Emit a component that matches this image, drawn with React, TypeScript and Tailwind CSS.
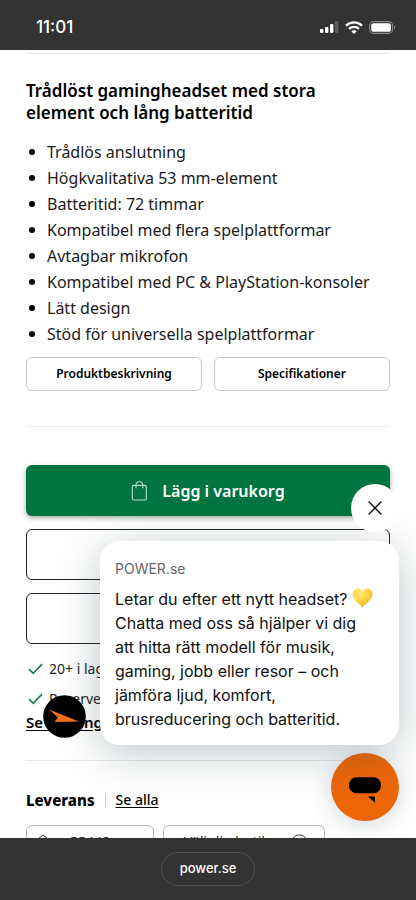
import React from "react";
import { clsx } from "clsx";

const features = [
  "Trådlös anslutning",
  "Högkvalitativa 53 mm-element",
  "Batteritid: 72 timmar",
  "Kompatibel med flera spelplattformar",
  "Avtagbar mikrofon",
  "Kompatibel med PC & PlayStation-konsoler",
  "Lätt design",
  "Stöd för universella spelplattformar",
];

const StatusBar = () => (
  <header className="flex h-[50px] shrink-0 items-center justify-between bg-[#333333] pr-5 pl-9 pt-1 text-white">
    <time className="font-['Inter',sans-serif] text-[17px] font-medium leading-5">11:01</time>
    <div className="flex items-center gap-[6px]">
      <svg width="19" height="12" viewBox="0 0 19 12" fill="#fff" aria-hidden="true">
        <rect x="0" y="8" width="3.4" height="4" rx="1" />
        <rect x="5" y="6" width="3.4" height="6" rx="1" />
        <rect x="10" y="3" width="3.4" height="9" rx="1" />
        <rect x="15" y="0" width="3.4" height="12" rx="1" fill="#5c5c5c" />
      </svg>
      <svg width="18" height="13" viewBox="0 0 18 13" fill="none" stroke="#fff" strokeWidth="2.3" aria-hidden="true">
        <path d="M1 4.6C5.5.2 12.5.2 17 4.6" />
        <path d="M4 7.9c2.8-2.7 7.2-2.7 10 0" />
        <path d="M9 13 6.3 10.3c1.5-1.4 3.9-1.4 5.4 0Z" fill="#fff" stroke="none" />
      </svg>
      <svg width="27" height="13" viewBox="0 0 27 13" fill="none" aria-hidden="true">
        <rect x=".6" y=".6" width="23" height="11.8" rx="4" stroke="#8a8a8a" strokeWidth="1.1" />
        <rect x="2.2" y="2.2" width="19.8" height="8.6" rx="2.6" fill="#fff" />
        <path d="M25 4.6c1.4.5 1.4 3.3 0 3.8Z" fill="#8a8a8a" />
      </svg>
    </div>
  </header>
);

const CheckIcon = () => (
  <svg className="shrink-0" width="15" height="12" viewBox="0 0 15 12" fill="none" stroke="#1b7f4b" strokeWidth="1.7" aria-hidden="true">
    <path d="M1 6.2 5.2 10.4 14 1.2" />
  </svg>
);

const Divider = ({ className }: { className?: string }) => (
  <hr className={clsx("border-t border-[#ebebeb]", className)} />
);

const ProductInfo = () => (
  <main className="min-h-0 flex-1 overflow-hidden px-[26px] pt-[3px]">
    <Divider />
    <h2 className="mt-[26px] max-w-[320px] text-[17px] font-semibold leading-[22px]">
      Trådlöst gamingheadset med stora element och lång batteritid
    </h2>
    <ul className="mt-[15px] text-base leading-[26px]">
      {features.map((feature) => (
        <li key={feature} className="flex items-center gap-3 pl-[3px] whitespace-nowrap text-[#1a1a1a]">
          <span className="size-[6px] rounded-full bg-black" />
          {feature}
        </li>
      ))}
    </ul>

    <div className="mt-[10px] grid grid-cols-2 gap-3 text-xs font-semibold">
      <button type="button" className="h-[34px] rounded-md border border-[#c8c8c8]">Produktbeskrivning</button>
      <button type="button" className="h-[34px] rounded-md border border-[#c8c8c8]">Specifikationer</button>
    </div>
    <Divider className="mt-[35px]" />

    <div className="mt-[38px] flex flex-col gap-[13px]">
      <button
        type="button"
        className="flex h-[51px] items-center justify-center gap-[14px] rounded-md bg-[#00753f] text-base font-semibold text-white shadow-[0_2px_5px_rgba(0,0,0,0.35)]"
      >
        <svg width="17" height="20" viewBox="0 0 17 20" fill="none" stroke="#b9dcc9" strokeWidth="1.1" aria-hidden="true">
          <rect x="1.3" y="4.4" width="14" height="14.6" rx="1.6" />
          <path d="M5 7.3V4.1a3.4 3.4 0 0 1 6.8 0v3.2" />
        </svg>
        Lägg i varukorg
      </button>
      <button type="button" aria-label="Alternativ 1" className="h-[51px] rounded-md border border-[#222]" />
      <button type="button" aria-label="Alternativ 2" className="h-[51px] rounded-md border border-[#222]" />
    </div>

    <ul className="mt-[15px] flex flex-col gap-[10px] text-[14px] leading-5 text-[#222]">
      <li className="flex items-center gap-[6px] pl-[2px]"><CheckIcon />20+ i lager</li>
      <li className="flex items-center gap-[6px] pl-[2px]"><CheckIcon />Reservera</li>
    </ul>
    <a href="#" className="mt-[3px] block text-[15px] font-semibold leading-5 underline underline-offset-2">Se tillgänglighet</a>
    <Divider className="mt-7" />

    <div className="mt-[27px] flex items-center gap-[10px] leading-6">
      <h3 className="text-[15px] font-extrabold">Leverans</h3>
      <span className="h-[13px] w-px bg-[#c8c8c8]" />
      <a href="#" className="text-[14px] font-medium underline underline-offset-2">Se alla</a>
    </div>
    <div className="mt-[13px] flex gap-[9px] text-[14px] leading-5 text-[#333]">
      <button type="button" className="flex h-[34px] w-[128px] items-center gap-[19px] rounded-md border border-[#b5b5b5] pl-2">
        <svg width="16" height="17" viewBox="0 0 16 17" fill="none" stroke="#333" aria-hidden="true">
          <path d="M1 6.5 8 1l7 5.5V16H1Z" />
        </svg>
        55448
      </button>
      <button type="button" className="flex h-[34px] w-[162px] items-center justify-between rounded-md border border-[#b5b5b5] pr-[17px] pl-5">
        <span>Välj din butik</span>
        <svg width="15" height="17" viewBox="0 0 15 17" fill="none" stroke="#333" aria-hidden="true">
          <rect x=".7" y="1" width="13.6" height="15" rx="6" />
          <circle cx="7.500" cy="7" r="2.500" />
        </svg>
      </button>
    </div>
  </main>
);

const ChatPopup = () => (
  <aside aria-label="Chatt" className="absolute right-[17px] bottom-[79px] left-[43px]">
    <div className="relative ml-[57px] rounded-[20px] bg-white px-[15px] pt-[18px] pb-[14px] font-['Inter',sans-serif] shadow-[0_8px_44px_rgba(40,65,75,0.3)]">
      <p className="text-sm leading-5 text-[#666]">POWER.se</p>
      <p className="mt-2 text-base leading-6 whitespace-nowrap text-[#111]">
        Letar du efter ett nytt headset?{" "}
        <svg className="inline-block align-[-3px]" width="21" height="20" viewBox="0 0 21 20" role="img" aria-label="💛">
          <defs>
            <radialGradient id="heart" cx="0.35" cy="0.25" r="0.8">
              <stop offset="0" stopColor="#ffe873" />
              <stop offset="0.6" stopColor="#fbd23c" />
              <stop offset="1" stopColor="#e9a91d" />
            </radialGradient>
          </defs>
          <path d="M10.5 19.5C9.3 16.5.5 12.500.5 6.2.5.2 8.2-1.2 10.5 4 12.8-1.2 20.5.2 20.5 6.2c0 6.3-8.800 10.3-10 13.3Z" fill="url(#heart)" />
        </svg>
        <br />
        Chatta med oss så hjälper vi dig
        <br />
        att hitta rätt modell för musik,
        <br />
        gaming, jobb eller resor – och
        <br />
        jämföra ljud, komfort,
        <br />
        brusreducering och batteritid.
      </p>
      <button type="button" aria-label="Stäng" className="absolute -top-[57px] right-0 flex size-12 items-center justify-center rounded-full bg-white">
        <svg width="14" height="14" viewBox="0 0 14 14" stroke="#111" strokeWidth="1.4" aria-hidden="true">
          <path d="M.6.6 13.400 13.400M13.400.6.6 13.400" />
        </svg>
      </button>
    </div>
    <svg className="absolute bottom-[83px] left-0" width="43" height="43" viewBox="0 0 43 43" role="img" aria-label="POWER">
      <circle cx="21.5" cy="21.5" r="21.3" fill="#000" />
      <path d="M6 14.5 36 26.5 11.500 27 15 22.500Z" fill="#f36f16" />
    </svg>
    <button type="button" aria-label="Öppna chatt" className="mt-2 ml-auto block size-[68px] rounded-full bg-[#ec6608] shadow-[0_4px_24px_rgba(40,60,70,0.2)]">
      <svg width="68" height="68" viewBox="0 0 68 68" aria-hidden="true">
        <rect x="18" y="24.3" width="32" height="16" rx="7.5" />
        <path d="M37 43.5h7v6.3Z" />
      </svg>
    </button>
  </aside>
);

const BrowserBar = () => (
  <footer className="relative flex h-[62px] shrink-0 items-center justify-center bg-[#333333]">
    <button type="button" className="h-[34px] rounded-full border border-[#505050] px-[18px] font-['Inter',sans-serif] text-[13px] font-medium text-white">
      power.se
    </button>
  </footer>
);

export default function App() {
  return (
    <div className="relative flex h-screen flex-col overflow-hidden bg-white font-['Noto_Sans',sans-serif] text-black">
      <StatusBar />
      <ProductInfo />
      <ChatPopup />
      <BrowserBar />
    </div>
  );
}
